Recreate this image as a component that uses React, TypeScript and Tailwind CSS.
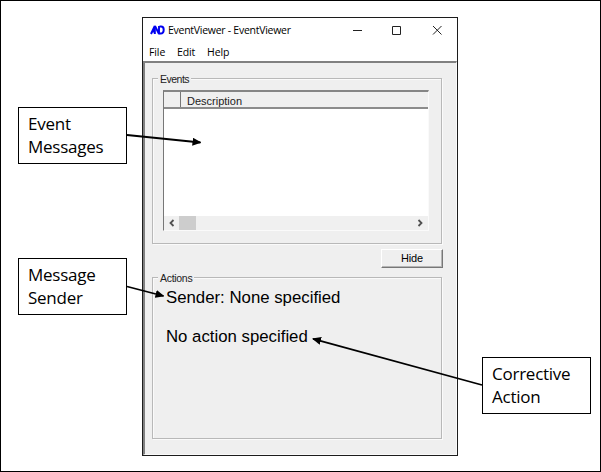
import React from 'react';

function Callout({ lines, className }: { lines: string[]; className: string }) {
  return (
    <div
      className={`h-[57px] w-[109px] border border-black bg-white pt-[4px] pl-[9px] font-['Open_Sans',sans-serif] text-[17px] leading-[23px] tracking-[-0.25px] text-black ${className}`}
    >
      {lines.map((line) => (
        <div key={line} className="whitespace-nowrap">{line}</div>
      ))}
    </div>
  );
}

function Group({ title, titleClass, className, children }: {
  title: string;
  titleClass: string;
  className: string;
  children: React.ReactNode;
}) {
  return (
    <section className={`relative w-[290px] border border-[#b8b8b8] shadow-[1px_1px_0_#fafafa,inset_1px_1px_0_#fafafa] ${className}`}>
      <h2 className={`absolute -top-[7px] left-[5px] h-[13px] bg-[#efefef] px-[2px] font-['Liberation_Sans',Arial,sans-serif] text-[10.5px] leading-[14px] whitespace-nowrap text-[#222] ${titleClass}`}>
        {title}
      </h2>
      {children}
    </section>
  );
}

function Logo() {
  return (
    <svg className="mt-[7px] h-[10px] w-[15px]" viewBox="0 0 15 10" fill="none" stroke="#0000f0">
      <path d="M1 9 4.800 1V9M2 6.500H5" strokeWidth="2" />
      <path d="M5 1 9 9V1" strokeWidth="1.9" />
      <path d="M9.500 1.500h1.500c2 0 2.700 1.200 2.700 3.200 0 2.500-1 3.800-3.100 3.800H9" strokeWidth="2" />
    </svg>
  );
}

function TitleBar() {
  return (
    <header className="flex h-[25px] pl-[7px]">
      <Logo />
      <h1 className="ml-[3px] w-[123px] pt-[4px] text-[10.5px] leading-[16px] tracking-[-0.27px] whitespace-nowrap">
        EventViewer - EventViewer
      </h1>
      <svg className="ml-[61px] h-[25px] w-[92px]" viewBox="0 0 92 25" fill="none" stroke="#222">
        <path d="M1 12.500h9" />
        <path d="M40.500 8.500h8v8h-8z" />
        <path d="m81 8 8.500 8.500m0-8.500L81 16.500" />
      </svg>
    </header>
  );
}

function EventList() {
  return (
    <div className="mt-[11px] ml-[10px] h-[141px] w-[266px] border-t-2 border-r border-b border-l border-t-[#858585] border-r-[#fafafa] border-b-[#fafafa] border-l-[#777] bg-white">
      <div className="flex h-[17px] border-b-2 border-[#8b8b8b] bg-[#efefef] font-['Liberation_Sans',Arial,sans-serif] text-[11px] leading-[19px] text-[#222]">
        <div className="w-[17px] border-r border-[#777]" />
        <div className="pl-[6px]">Description</div>
      </div>
      <div className="h-[107px]" />
      <div className="flex h-[14px] bg-[#f0f0f0]">
        <svg className="h-[14px] w-[15px]" viewBox="0 0 15 14" fill="none" stroke="#505050" strokeWidth="1.8">
          <path d="M9.500 4 6.500 7l3 3" />
        </svg>
        <div className="h-[14px] w-[17px] bg-[#cdcdcd]" />
        <svg className="ml-auto h-[14px] w-[15px]" viewBox="0 0 15 14" fill="none" stroke="#505050" strokeWidth="1.8">
          <path d="m5.500 4 3 3-3 3" />
        </svg>
      </div>
    </div>
  );
}

function EventViewerWindow() {
  return (
    <main className="ml-[15px] mt-[16px] h-[439px] w-[316px] border border-[#1c1c1c] bg-white font-['Open_Sans',sans-serif] text-black">
      <TitleBar />
      <nav className="flex h-[18px] text-[10.5px] leading-[19px] tracking-[-0.1px]">
        <span className="ml-[6px] w-[28px]">File</span>
        <span className="w-[30px]">Edit</span>
        <span>Help</span>
      </nav>
      <div className="flex h-[394px] flex-col border-t-2 border-r border-b border-l-2 border-t-[#808080] border-r-[#fafafa] border-b-[#fafafa] border-l-[#808080] bg-[#efefef] pl-[7px]">
        <Group title="Events" titleClass="tracking-[-0.5px]" className="mt-[15px] h-[166px]">
          <EventList />
        </Group>
        <button className="mt-[5px] ml-[229px] h-[19px] w-[62px] border border-t-white border-r-[#777] border-b-[#777] border-l-white bg-[#efefef] font-['Liberation_Sans',Arial,sans-serif] text-[11px] leading-[17px] tracking-[-0.2px] shadow-[inset_-1px_-1px_0_#b5b5b5]">
          Hide
        </button>
        <Group title="Actions" titleClass="tracking-[-0.3px]" className="mt-[9px] h-[162px]">
          <div className="pt-[10px] pl-[13px] font-['Liberation_Sans',Arial,sans-serif] text-[16.8px] leading-[20px]">
            <p>Sender: None specified</p>
            <p className="mt-[19px]">No action specified</p>
          </div>
        </Group>
      </div>
    </main>
  );
}

export default function App() {
  return (
    <div className="relative flex h-[472px] w-[601px] overflow-hidden border border-black bg-white">
      <aside className="ml-[17px] w-[109px] pt-[106px]">
        <Callout lines={['Event', 'Messages']} className="" />
        <Callout lines={['Message', 'Sender']} className="mt-[94px]" />
      </aside>
      <EventViewerWindow />
      <aside className="ml-[24px] pt-[356px]">
        <Callout lines={['Corrective', 'Action']} className="" />
      </aside>
      <svg className="pointer-events-none absolute -top-px -left-px h-[472px] w-[601px]" viewBox="0 0 601 472">
        <defs>
          <marker id="head" markerWidth="9" markerHeight="8" refX="8" refY="4" orient="auto" markerUnits="userSpaceOnUse">
            <path d="M0 0 9 4 0 8z" />
          </marker>
        </defs>
        <g stroke="black" strokeWidth="1.8">
          <path d="M127 135 200.500 142.500" markerEnd="url(#head)" />
          <path d="M127 286.500 163.500 296" markerEnd="url(#head)" />
          <path d="M482 385 313 338.800" markerEnd="url(#head)" />
        </g>
      </svg>
    </div>
  );
}
